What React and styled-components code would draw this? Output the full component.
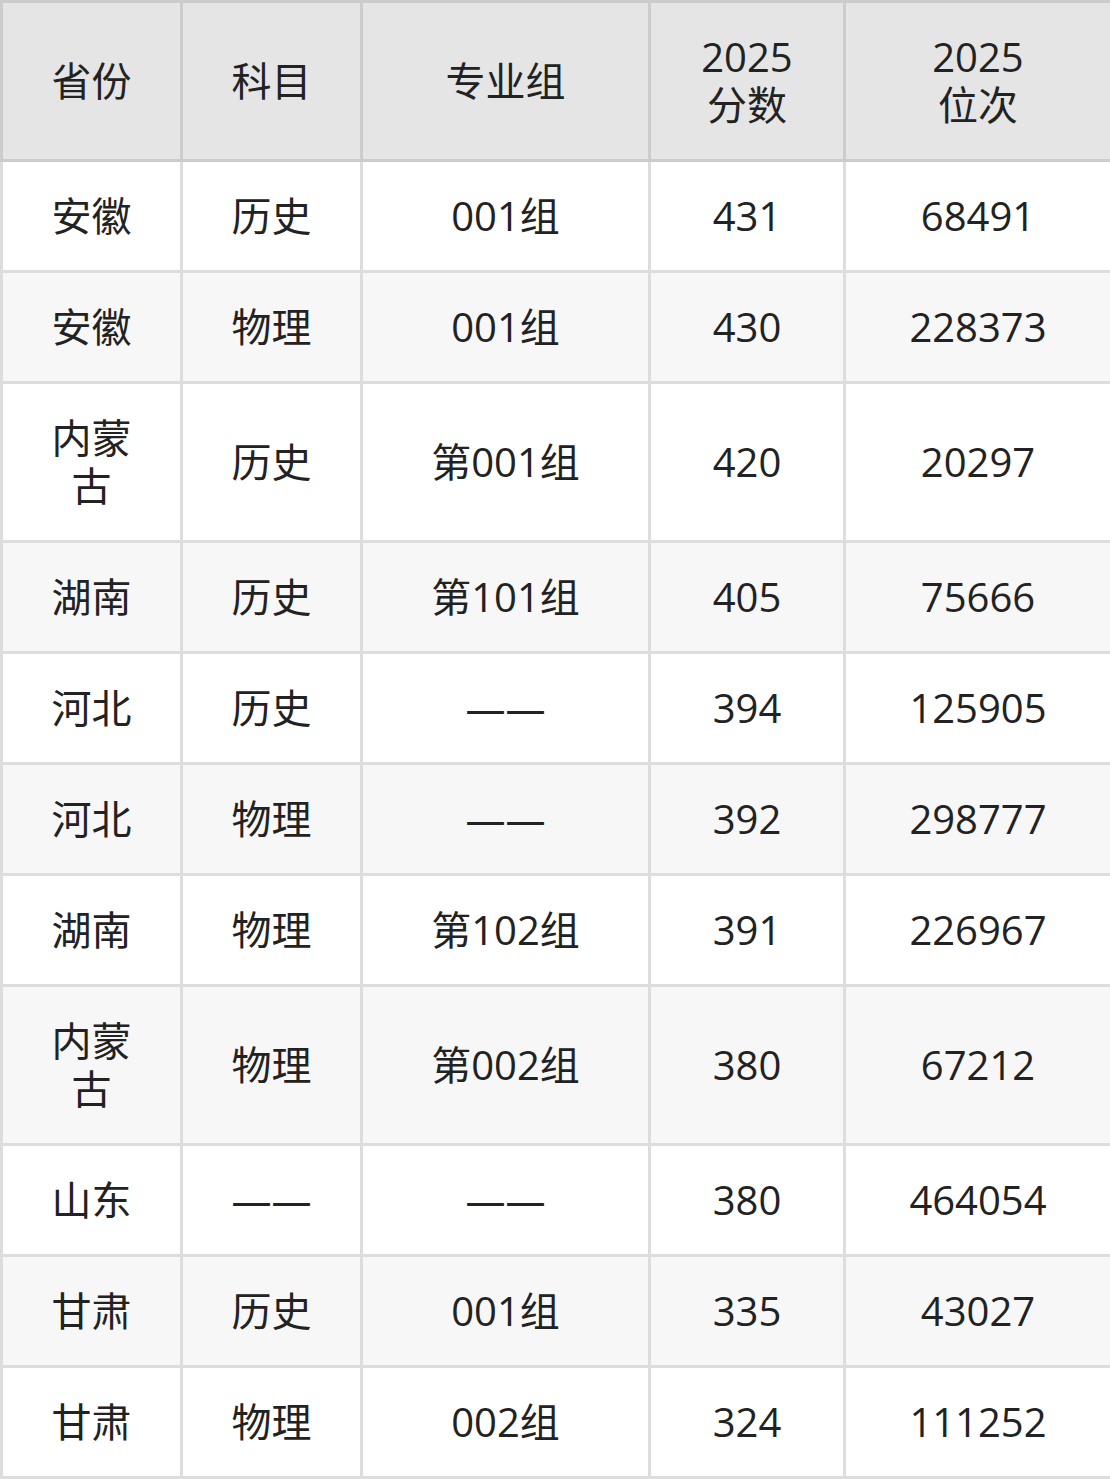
import styled, { createGlobalStyle } from "styled-components";

const GlobalStyle = createGlobalStyle`
  html, body {
    margin: 0;
    padding: 0;
    background: #ffffff;
  }
`;

const rows = [
  ["安徽", "历史", "001组", "431", "68491"],
  ["安徽", "物理", "001组", "430", "228373"],
  ["内蒙古", "历史", "第001组", "420", "20297"],
  ["湖南", "历史", "第101组", "405", "75666"],
  ["河北", "历史", "——", "394", "125905"],
  ["河北", "物理", "——", "392", "298777"],
  ["湖南", "物理", "第102组", "391", "226967"],
  ["内蒙古", "物理", "第002组", "380", "67212"],
  ["山东", "——", "——", "380", "464054"],
  ["甘肃", "历史", "001组", "335", "43027"],
  ["甘肃", "物理", "002组", "324", "111252"],
];

const colWidths = [180, 180, 288, 195, 267];

const Table = styled.table`
  width: 1110px;
  border-collapse: collapse;
  table-layout: fixed;
  font-family: "Open Sans", "Noto Sans CJK SC", sans-serif;
  font-size: 40px;
  line-height: 48px;
  color: #222222;
  border: 3px solid #d4d4d4;
`;

const HeadCell = styled.th`
  background: #e5e5e5;
  border: 3px solid #cccccc;
  font-weight: 400;
  padding: 30px 10px;
  text-align: center;
`;

const Row = styled.tr`
  background: ${props => (props.odd ? "#f7f7f7" : "#ffffff")};
`;

const Cell = styled.td`
  border: 3px solid #dddddd;
  padding: 30px 40px;
  text-align: center;
  word-break: break-all;
`;

function App() {
  return (
    <>
      <GlobalStyle />
      <Table>
        <colgroup>
          {colWidths.map((w, i) => (
            <col key={i} style={{ width: w }} />
          ))}
        </colgroup>
        <thead>
          <tr>
            <HeadCell>省份</HeadCell>
            <HeadCell>科目</HeadCell>
            <HeadCell>专业组</HeadCell>
            <HeadCell>2025<br />分数</HeadCell>
            <HeadCell>2025<br />位次</HeadCell>
          </tr>
        </thead>
        <tbody>
          {rows.map((r, i) => (
            <Row key={i} odd={i % 2 === 1}>
              {r.map((c, j) => (
                <Cell key={j}>{c}</Cell>
              ))}
            </Row>
          ))}
        </tbody>
      </Table>
    </>
  );
}

export default App;
